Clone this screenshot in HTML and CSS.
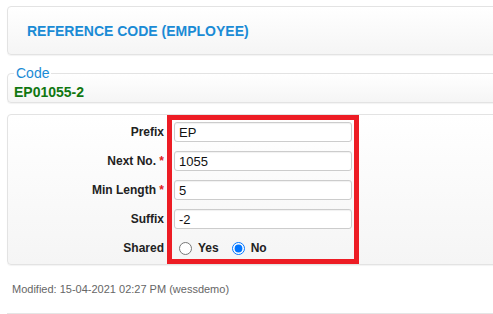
FILE: index.html
```html
<!DOCTYPE html>
<html lang="en">
  <head>
    <meta charset="UTF-8" />
    <meta name="viewport" content="width=device-width, initial-scale=1.0" />
    <title>Reference Code (Employee)</title>
    <link rel="stylesheet" href="styles.css">
  </head>
  <body>
    <div class="page">
      <div class="panel header">
        <h1 class="title">REFERENCE CODE (EMPLOYEE)</h1>
      </div>

      <fieldset class="code-box">
        <legend>Code</legend>
        <div class="code-value">EP01055-2</div>
      </fieldset>

      <div class="panel form-panel">
        <div class="labels">
          <label for="prefix">Prefix</label>
          <label for="nextNo">Next No. <span class="req">*</span></label>
          <label for="minLength">Min Length <span class="req">*</span></label>
          <label for="suffix">Suffix</label>
          <label>Shared</label>
        </div>

        <div class="fields">
          <input type="text" id="prefix" value="EP" />
          <input type="text" id="nextNo" value="1055" />
          <input type="text" id="minLength" value="5" />
          <input type="text" id="suffix" value="-2" />
          <div class="radio-row">
            <input type="radio" name="shared" id="sharedYes" />
            <label for="sharedYes">Yes</label>
            <input type="radio" name="shared" id="sharedNo" checked />
            <label for="sharedNo">No</label>
          </div>
        </div>
      </div>

      <div class="modified">Modified: 15-04-2021 02:27 PM (wessdemo)</div>
      <div class="footer-line"></div>
    </div>
  </body>
</html>
```

FILE: styles.css
```css
body {
  margin: 0;
  overflow: hidden;
  font-family: "Liberation Sans", Arial, sans-serif;
  background-color: #fff;
}
.page {
  width: 560px;
  padding: 6px 0 0 7px;
}
.panel {
  border: 1px solid #e3e3e3;
  border-radius: 4px;
  background: linear-gradient(#fff, #f5f5f5);
  box-shadow: 0 1px 1px rgba(0, 0, 0, 0.05);
}
.header {
  height: 47px;
  display: flex;
  align-items: center;
  padding-left: 19px;
}
.title {
  margin: 0;
  font-size: 14px;
  font-weight: bold;
  color: #1a8bd5;
}
.code-box {
  margin: 10px 0 0;
  padding: 0 6px 2px;
  border: 1px solid #e3e3e3;
  border-radius: 4px;
  background: linear-gradient(#fff, #f5f5f5);
  box-shadow: 0 1px 1px rgba(0, 0, 0, 0.05);
}
.code-box legend {
  padding: 0 2px;
  font-size: 14px;
  line-height: 16px;
  color: #1a8bd5;
}
.code-value {
  margin-top: 3px;
  font-size: 14px;
  line-height: 16px;
  font-weight: bold;
  color: #117711;
}
.form-panel {
  margin-top: 11px;
  display: flex;
}
.labels {
  width: 156px;
  padding-top: 7px;
  display: flex;
  flex-direction: column;
  gap: 9px;
}
.labels label {
  height: 20px;
  line-height: 20px;
  text-align: right;
  font-size: 12px;
  font-weight: bold;
  color: #222;
}
.req {
  color: #e02020;
}
.fields {
  margin-left: 3px;
  width: 178px;
  padding: 2px 2px 1px 2px;
  border: 5px solid #ed1c24;
  display: flex;
  flex-direction: column;
  gap: 9px;
}
.fields input[type="text"] {
  width: 100%;
  height: 20px;
  box-sizing: border-box;
  margin: 0;
  padding: 0 4px;
  border: 1px solid #ccc;
  border-radius: 3px;
  background-color: #fff;
  box-shadow: inset 0 1px 1px rgba(0, 0, 0, 0.06);
  font-family: "Liberation Sans", Arial, sans-serif;
  font-size: 13px;
  color: #111;
}
.radio-row {
  height: 20px;
  display: flex;
  align-items: center;
  padding-left: 5px;
  font-size: 12px;
  font-weight: bold;
  color: #222;
}
.radio-row input {
  width: 13px;
  height: 13px;
  margin: 0 6px 0 0;
}
.radio-row label {
  margin-right: 13px;
}
.modified {
  margin-top: 18px;
  padding-left: 5px;
  font-size: 11px;
  line-height: 13px;
  color: #666;
}
.footer-line {
  margin-top: 17px;
  border-top: 1px solid #e5e5e5;
}
```
